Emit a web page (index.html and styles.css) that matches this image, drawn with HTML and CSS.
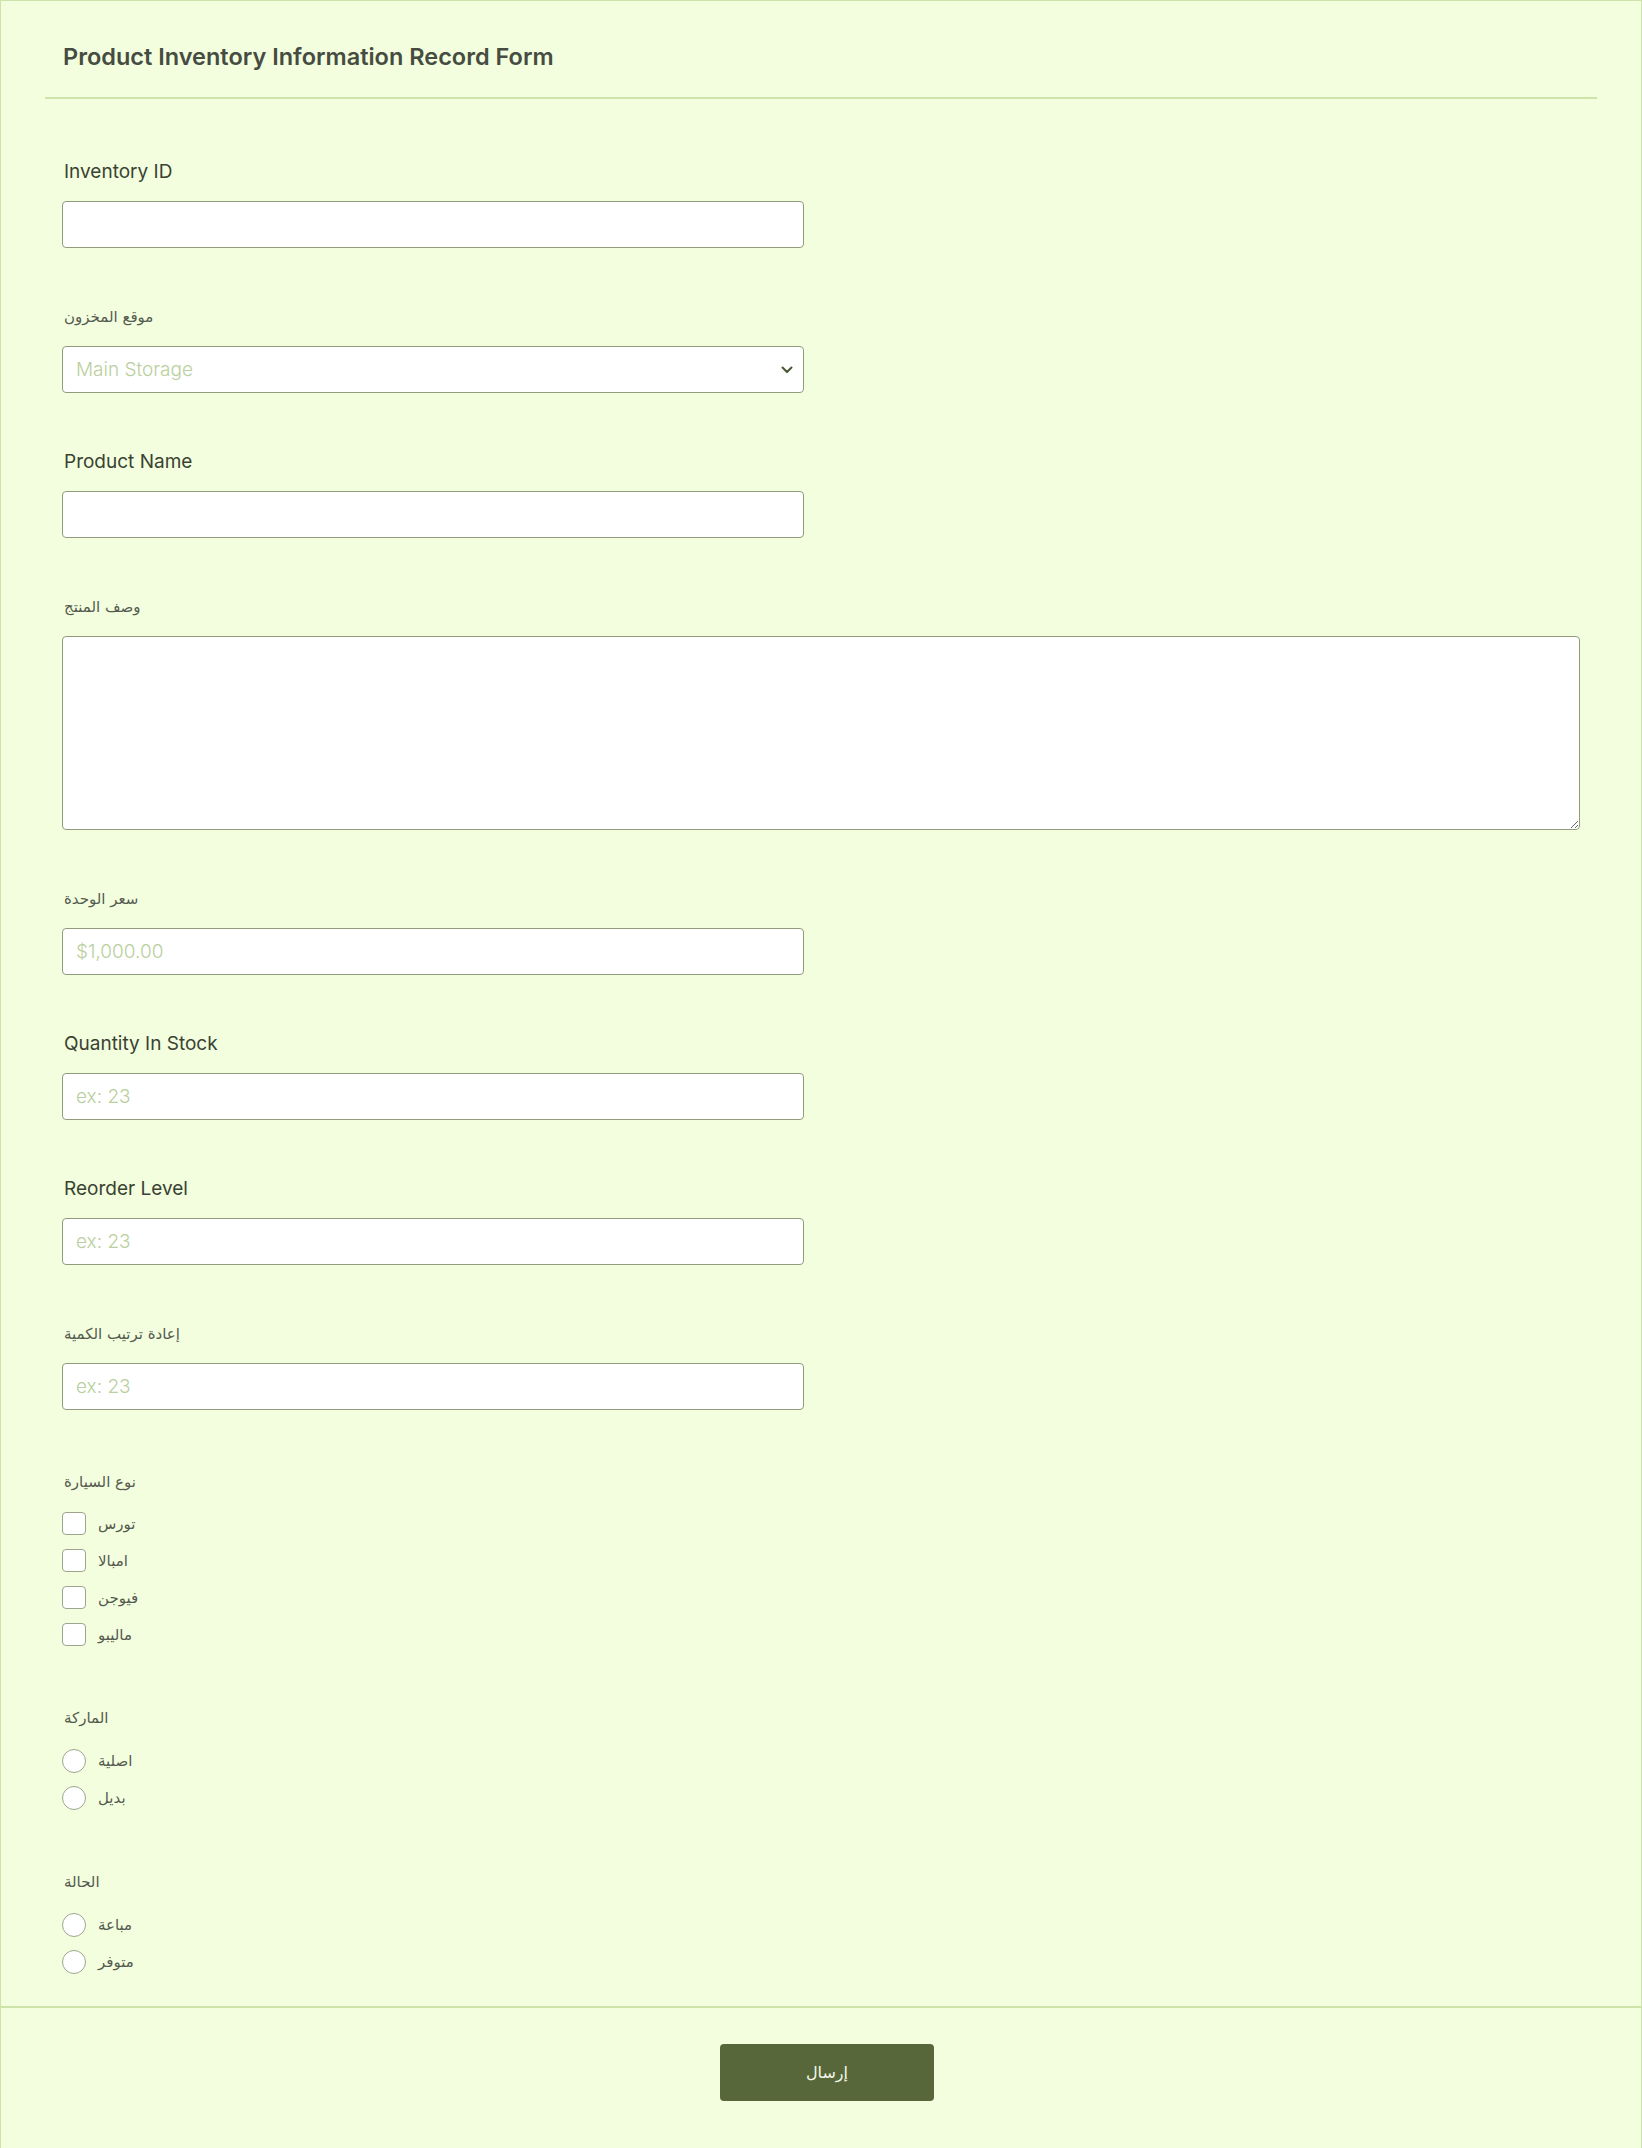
FILE: index.html
```html
<!DOCTYPE html>
<html lang="en">
<head>
  <meta charset="UTF-8" />
  <meta name="viewport" content="width=device-width, initial-scale=1.0"/>
  <title>Product Inventory Information Record Form</title>
  <link rel="stylesheet" href="styles.css">
</head>
<body>

  <form class="form" onsubmit="return false">
    <div class="form-header">
      <h1>Product Inventory Information Record Form</h1>
    </div>

    <div class="form-body">
      <div class="field">
        <label for="inventory-id">Inventory ID</label>
        <input type="text" id="inventory-id" class="input">
      </div>

      <div class="field">
        <label class="ar" for="location">موقع المخزون</label>
        <div class="select-wrap">
          <select id="location" class="input select">
            <option>Main Storage</option>
          </select>
          <svg class="chevron" width="12" height="8" viewBox="0 0 12 8"><path d="M1.5 1.5 6 6l4.5-4.5" fill="none" stroke="#4a5535" stroke-width="2" stroke-linecap="round" stroke-linejoin="round"/></svg>
        </div>
      </div>

      <div class="field">
        <label for="product-name">Product Name</label>
        <input type="text" id="product-name" class="input">
      </div>

      <div class="field">
        <label class="ar" for="description">وصف المنتج</label>
        <textarea id="description" class="input textarea"></textarea>
      </div>

      <div class="field">
        <label class="ar" for="price">سعر الوحدة</label>
        <input type="text" id="price" class="input" placeholder="$1,000.00">
      </div>

      <div class="field">
        <label for="qty">Quantity In Stock</label>
        <input type="text" id="qty" class="input" placeholder="ex: 23">
      </div>

      <div class="field">
        <label for="reorder-level">Reorder Level</label>
        <input type="text" id="reorder-level" class="input" placeholder="ex: 23">
      </div>

      <div class="field">
        <label class="ar" for="reorder-qty">إعادة ترتيب الكمية</label>
        <input type="text" id="reorder-qty" class="input" placeholder="ex: 23">
      </div>

      <!-- Opciones -->
      <div class="field choice">
        <label class="ar">نوع السيارة</label>
        <div class="options checks">
          <div class="option"><input type="checkbox" id="car1"><label for="car1">تورس</label></div>
          <div class="option"><input type="checkbox" id="car2"><label for="car2">امبالا</label></div>
          <div class="option"><input type="checkbox" id="car3"><label for="car3">فيوجن</label></div>
          <div class="option"><input type="checkbox" id="car4"><label for="car4">ماليبو</label></div>
        </div>
      </div>

      <div class="field choice">
        <label class="ar">الماركة</label>
        <div class="options radios">
          <div class="option"><input type="radio" name="brand" id="brand1"><label for="brand1">اصلية</label></div>
          <div class="option"><input type="radio" name="brand" id="brand2"><label for="brand2">بديل</label></div>
        </div>
      </div>

      <div class="field choice">
        <label class="ar">الحالة</label>
        <div class="options radios">
          <div class="option"><input type="radio" name="status" id="status1"><label for="status1">مباعة</label></div>
          <div class="option"><input type="radio" name="status" id="status2"><label for="status2">متوفر</label></div>
        </div>
      </div>
    </div>

    <div class="form-footer">
      <button type="submit">إرسال</button>
    </div>
  </form>

</body>
</html>
```

FILE: styles.css
```css
body { margin: 0; padding: 0; background: #f2fedd; font-family: 'Inter', 'DejaVu Sans', sans-serif; color: #3e4637; }
.form { display: block; min-height: 2148px; box-sizing: border-box; border: 1px solid #cde3a9; border-bottom: none; background: #f2fedd; }
.form-header { margin: 0 44px; padding: 41px 18px 25px; border-bottom: 2px solid #cde3a9; }
.form-header h1 { margin: 0; font-size: 23.5px; line-height: 30px; font-weight: 600; color: #474c42; }
.form-body { padding: 33px 61px 3px; }
.field { padding: 29px 0; }
.field.choice { padding-top: 32px; }
.field.choice:first-of-type { padding-top: 30px; }
.field > label { display: block; padding-left: 2px; margin-bottom: 18px; font-size: 19px; line-height: 22px; font-weight: 400; color: #3a4233; }
.field > label.ar { font-family: 'DejaVu Sans', sans-serif; font-size: 15px; font-weight: 400; color: #555a50; }
.input { display: block; width: 742px; height: 47px; box-sizing: border-box; margin: 0; padding: 0 13px; background: #fff; border: 1px solid #919c7a; border-radius: 4px; font-family: 'Inter', sans-serif; font-size: 19px; font-weight: 300; color: #3e4637; outline: none; }
.input::placeholder { color: #b9cf9d; }
.select-wrap { position: relative; width: 742px; }
.select { appearance: none; -webkit-appearance: none; color: #b9cf9d; }
.chevron { position: absolute; right: 11px; top: 20px; pointer-events: none; }
.textarea { width: 100%; height: 194px; padding: 12px 13px; resize: vertical; }
.options { display: flex; flex-direction: column; }
.checks { margin-top: 19px; gap: 14px; }
.radios { margin-top: 20px; gap: 13px; }
.option { display: flex; align-items: center; }
.option label { margin-left: 12px; font-family: 'DejaVu Sans', sans-serif; font-size: 15px; color: #555a50; }
.option input { appearance: none; -webkit-appearance: none; margin: 0; background: #fff; border: 1px solid #9ea58e; }
.option input[type="checkbox"] { width: 24px; height: 23px; border-radius: 4px; }
.option input[type="radio"] { width: 24px; height: 24px; border-radius: 50%; }
.form-footer { border-top: 2px solid #cde3a9; padding: 36px 0 47px; display: flex; justify-content: center; }
.form-footer button { width: 214px; height: 57px; margin-left: 12px; background: #58673a; color: #f4f8ea; border: none; border-radius: 4px; font-family: 'DejaVu Sans', sans-serif; font-size: 16px; cursor: pointer; }
.form-footer button:hover { background: #4b5831; }
```
